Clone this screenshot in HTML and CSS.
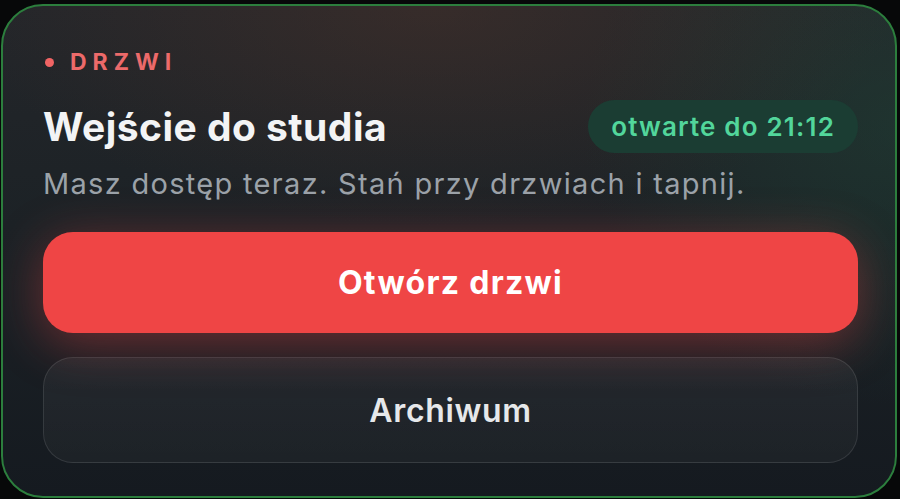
FILE: index.html
```html
<!DOCTYPE html>
<html lang="pl">
<head>
<meta charset="utf-8">
<title>Drzwi</title>
<link rel="stylesheet" href="styles.css">
</head>
<body>
  <section class="card">
    <div class="eyebrow"><span class="dot"></span><span class="eyebrow-text">DRZWI</span></div>
    <div class="header">
      <h1 class="title">Wejście do studia</h1>
      <span class="pill">otwarte do 21:12</span>
    </div>
    <p class="subtitle">Masz dostęp teraz. Stań przy drzwiach i tapnij.</p>
    <button class="btn btn-primary">Otwórz drzwi</button>
    <button class="btn btn-secondary">Archiwum</button>
  </section>
</body>
</html>
```
FILE: styles.css
```css
html, body {
  margin: 0;
  padding: 0;
  background: #070809;
  width: 900px;
  height: 499px;
  overflow: hidden;
  font-family: Inter, "Noto Sans", "Liberation Sans", sans-serif;
}

.card {
  box-sizing: border-box;
  width: 896px;
  height: 494px;
  margin: 4px 0 0 1px;
  border: 2px solid #2c7e3d;
  border-radius: 42px;
  padding: 44px 37px 0 40px;
  display: flex;
  flex-direction: column;
  background:
    radial-gradient(ellipse 460px 220px at 430px 0px, rgba(90, 55, 42, 0.35), rgba(90, 55, 42, 0) 100%),
    radial-gradient(ellipse 320px 280px at 900px 120px, rgba(30, 75, 58, 0.4), rgba(30, 75, 58, 0) 100%),
    linear-gradient(180deg, #24262a 0%, #1c2226 45%, #151a20 100%);
}

.eyebrow {
  display: flex;
  align-items: center;
  height: 24px;
  gap: 16px;
}

.dot {
  width: 9px;
  height: 9px;
  border-radius: 50%;
  background: #f06464;
  margin-left: 2px;
}

.eyebrow-text {
  color: #ec6a6a;
  font-size: 23px;
  font-weight: 700;
  letter-spacing: 0.26em;
}

.header {
  display: flex;
  align-items: center;
  justify-content: space-between;
  margin-top: 26px;
  height: 53px;
}

.title {
  margin: 0;
  color: #f3f4f5;
  font-size: 39px;
  font-weight: 700;
  letter-spacing: 0.012em;
}

.pill {
  box-sizing: border-box;
  height: 53px;
  padding: 0 23px;
  display: flex;
  align-items: center;
  border-radius: 27px;
  background: #1b3d33;
  color: #52d69b;
  font-size: 26px;
  font-weight: 600;
  letter-spacing: 0.045em;
}

.subtitle {
  margin: 14px 0 0 0;
  color: #9ba2a9;
  font-size: 29px;
  line-height: 34px;
  letter-spacing: 0.045em;
}

.btn {
  box-sizing: border-box;
  width: 100%;
  font-family: inherit;
  cursor: pointer;
  display: flex;
  align-items: center;
  justify-content: center;
}

.btn-primary {
  margin-top: 31px;
  height: 101px;
  border: none;
  border-radius: 30px;
  background: #ef4545;
  color: #ffffff;
  font-size: 32px;
  font-weight: 700;
  letter-spacing: 0.04em;
  box-shadow: 0 10px 50px rgba(239, 69, 69, 0.4);
}

.btn-secondary {
  margin-top: 24px;
  height: 106px;
  border: 1.5px solid rgba(255, 255, 255, 0.1);
  border-radius: 30px;
  background: linear-gradient(180deg, rgba(255, 255, 255, 0.05), rgba(255, 255, 255, 0.03));
  color: #e6e8ea;
  font-size: 32px;
  font-weight: 600;
  letter-spacing: 0.02em;
}
```
